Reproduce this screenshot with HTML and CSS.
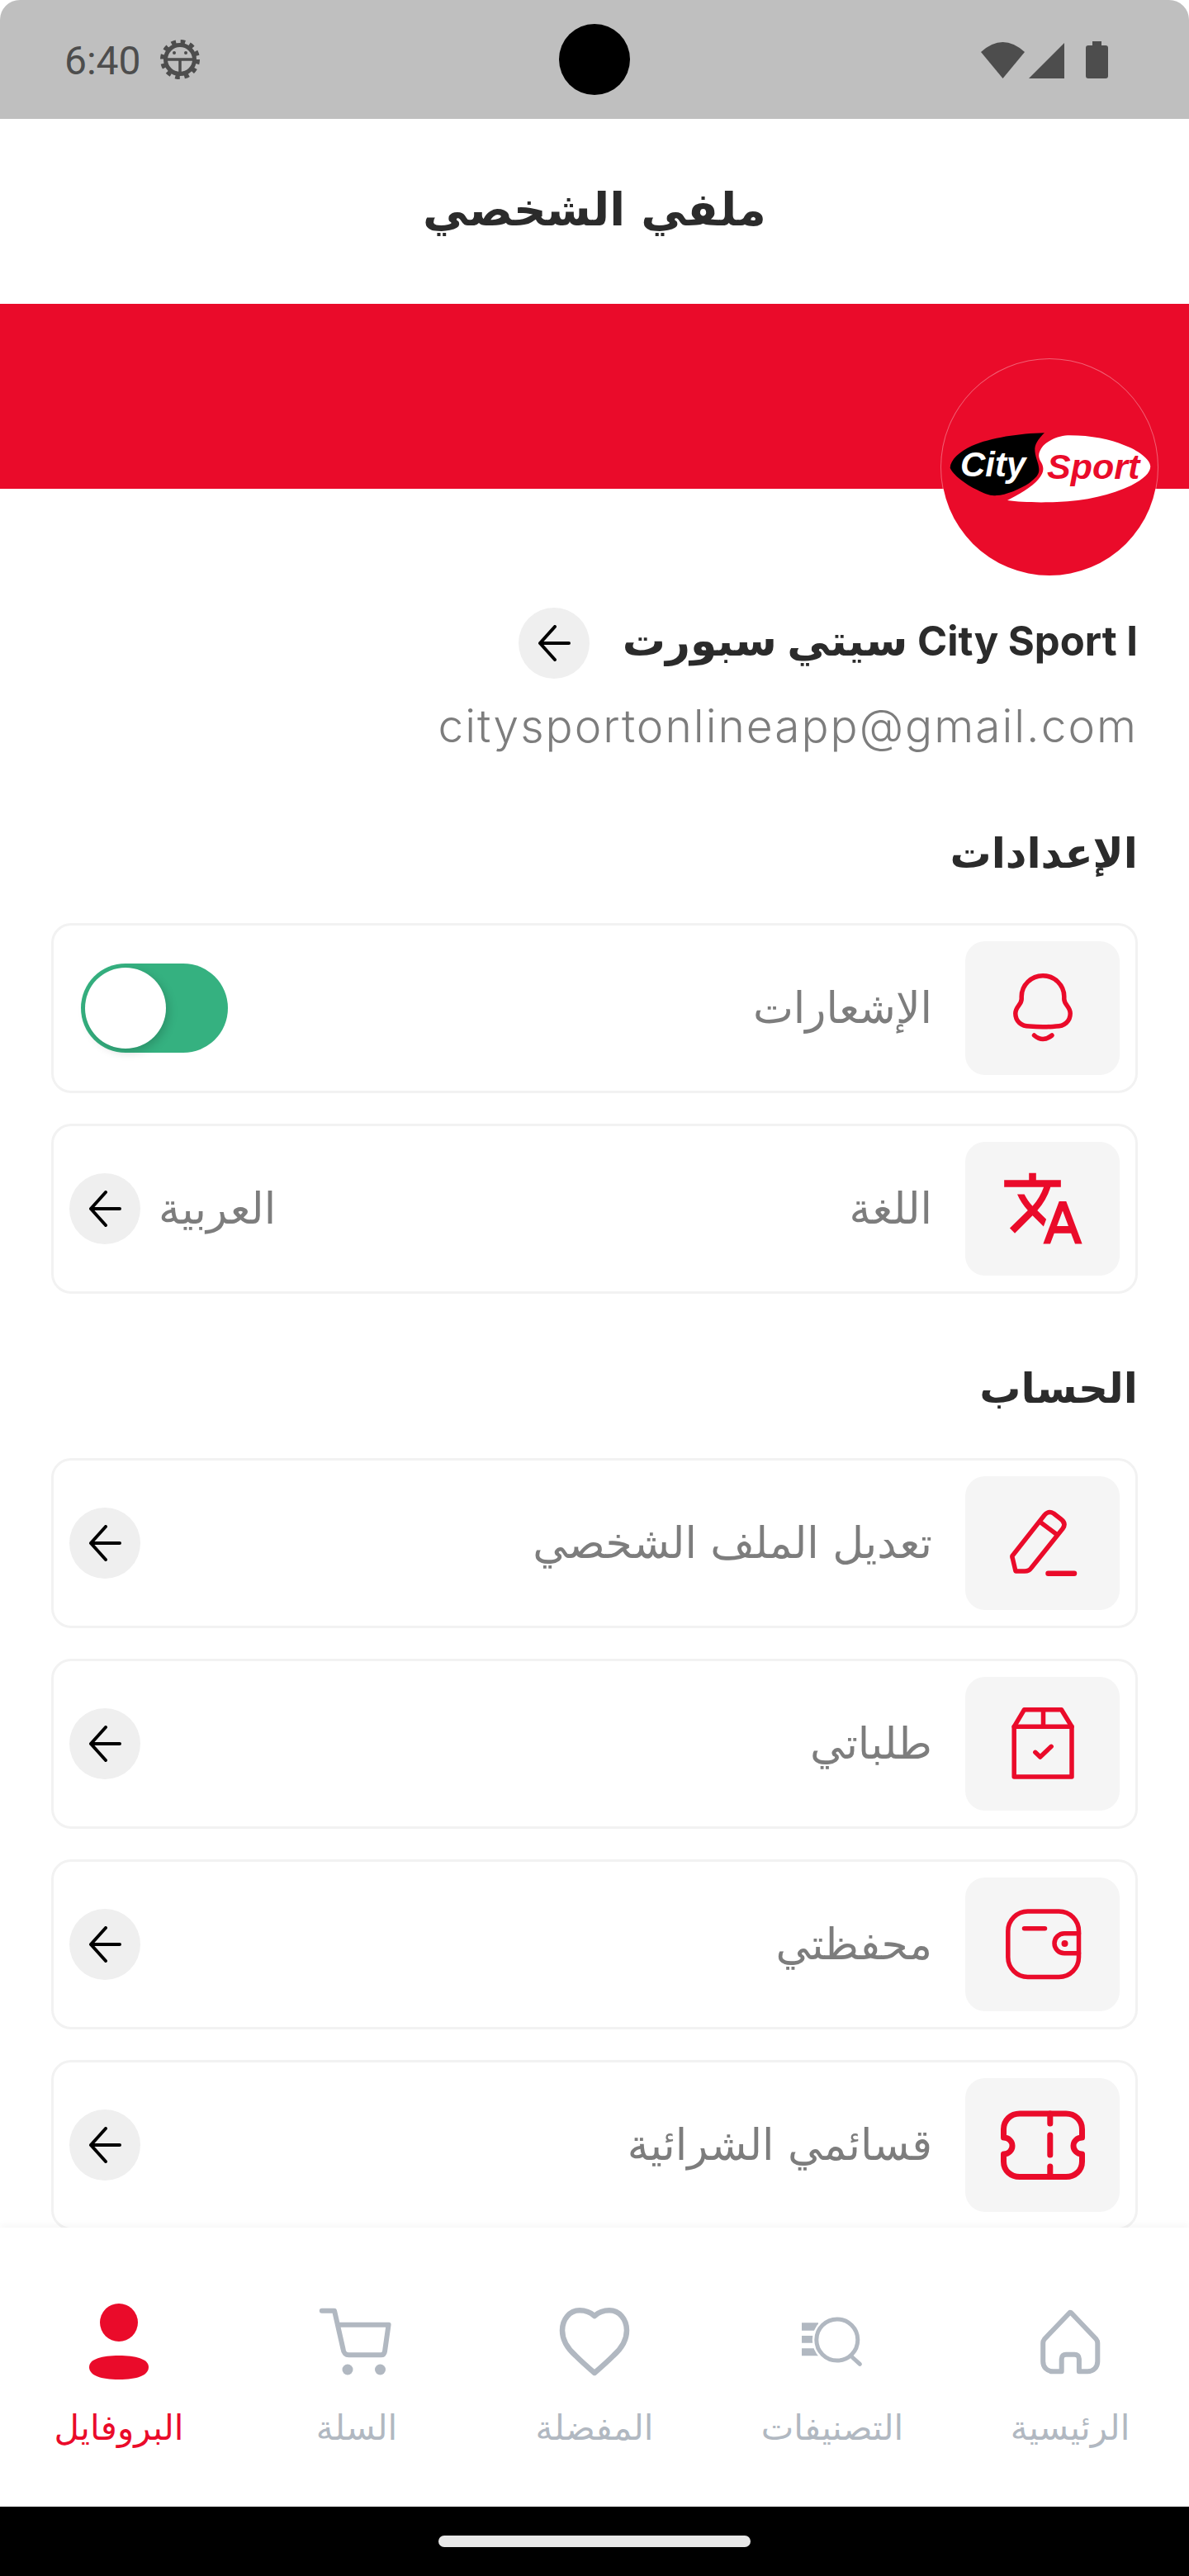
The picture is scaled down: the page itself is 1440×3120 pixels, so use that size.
FILE: index.html

```html
<!DOCTYPE html>
<html lang="ar" dir="rtl">
<head>
    <meta charset="UTF-8">
    <title>ملفي الشخصي</title>
    <link rel="stylesheet" href="styles.css">
</head>
<body>
    <div class="phone">
        <div class="status-bar" dir="ltr">
            <span class="time">6:40</span>
            <svg class="gear" viewBox="0 0 50 50" fill="none" stroke="#4d4d4d"><circle cx="25" cy="25" r="17.500" stroke-width="5"/><circle cx="25" cy="25" r="21.500" stroke-width="5" stroke-dasharray="5.630 5.630"/><path d="M8 25H42M25 25V42" stroke-width="3.500"/><circle cx="18" cy="17" r="2" fill="#4d4d4d" stroke="none"/><circle cx="32" cy="17" r="2" fill="#4d4d4d" stroke="none"/></svg>
            <div class="punch-hole"></div>
            <div class="status-icons">
                <svg width="53" height="44" viewBox="0 0 53 44"><path d="M26.500 44L0 12Q26.500-12 53 12z" fill="#4d4d4d"/></svg>
                <svg width="43" height="43" viewBox="0 0 43 43"><path d="M43 0v43H0z" fill="#4d4d4d"/></svg>
                <svg class="battery" width="27" height="45" viewBox="0 0 27 45"><path d="M8 0h11v5h5a3 3 0 0 1 3 3v34a3 3 0 0 1-3 3H3a3 3 0 0 1-3-3V8a3 3 0 0 1 3-3h5z" fill="#4d4d4d"/></svg>
            </div>
        </div>

        <header class="top-bar">
            <h1>ملفي الشخصي</h1>
        </header>

        <main class="content">
            <div class="banner">
                <div class="avatar">
                    <svg viewBox="0 0 262 262" width="262" height="262">
                        <path d="M153 92.300C180 92 205 97 221 104 238 110 253 121 253.300 130 253 138 245 145 230 153 206 164 175 172 140 173 115 174 95 173 80 171 92 165 110 155 118 145 124 138 125 132 121 125 116 117 118 112 123.300 105 130 98 142 93 153 92.300Z" fill="#fff"/>
                        <path d="M125 89.300C95 90 60 95 37 105 22 112 11 122 10.700 131.700 14 140 30 152 43.300 158.300 52 163 60 166 66.700 165 78 165 96 157 106.700 150 114 144 119 140 118.300 133 118 125 113 118 113.300 108.300 114 101 120 94 125 89.300Z" fill="#000"/>
                        <text class="logo-city" x="23" y="142">City</text>
                        <text class="logo-sport" x="128" y="145">Sport</text>
                    </svg>
                </div>
            </div>

            <section class="profile">
                <div class="name-row">
                    <span class="name">City Sport I <span class="name-ar">سيتي سبورت</span></span>
                    <span class="arrow-btn"><svg width="40" height="44" viewBox="0 0 40 44"><path d="M38 22H3M21 2L3 22l18 20" fill="none" stroke="#000" stroke-width="4" stroke-linecap="round" stroke-linejoin="round"/></svg></span>
                </div>
                <div class="email" dir="ltr">citysportonlineapp@gmail.com</div>
            </section>

            <section class="group settings">
                <h2>الإعدادات</h2>
                <div class="row">
                    <div class="row-icon">
                        <svg viewBox="0 0 100 100"><path d="M50 10.700C36 10.700 24.200 22 24.200 36V39C24.200 46 16.800 48 16.800 56.500 16.800 66 24 72 34 72 44 73 56 73 66 72 76 72 83.200 66 83.200 56.500 83.200 48 75.800 46 75.800 39V36C75.800 22 64 10.700 50 10.700Z"/><path d="M39.500 83Q50 92 61 83"/></svg>
                    </div>
                    <span class="row-label">الإشعارات</span>
                    <span class="toggle"><span class="thumb"></span></span>
                </div>
                <div class="row">
                    <div class="row-icon">
                        <svg viewBox="0.260 0.440 23.300 23.300"><path class="solid" d="M12.870 15.070l-2.540-2.510.03-.03c1.740-1.940 2.980-4.170 3.710-6.530H17V4h-7V2H8v2H1v1.990h11.170C11.500 7.920 10.440 9.750 9 11.350 8.070 10.320 7.300 9.190 6.690 8h-2c.73 1.630 1.730 3.170 2.980 4.560l-5.090 5.020L4 19l5-5 3.110 3.110.76-2.040zM18.500 10h-2L12 22h2l1.120-3h4.750L21 22h2l-4.500-12zm-2.620 7l1.620-4.330L19.120 17h-3.240z"/></svg>
                    </div>
                    <span class="row-label">اللغة</span>
                    <span class="row-value">العربية</span>
                    <span class="arrow-btn small"><svg width="40" height="44" viewBox="0 0 40 44"><path d="M38 22H3M21 2L3 22l18 20" fill="none" stroke="#000" stroke-width="4" stroke-linecap="round" stroke-linejoin="round"/></svg></span>
                </div>
            </section>

            <section class="group account">
                <h2>الحساب</h2>
                <div class="row">
                    <div class="row-icon">
                        <svg viewBox="0 0 100 100"><path d="M13 65.500L52 16C55 12.500 59 11.500 63 14L72 21C76.500 24.500 77 28.500 74 32.500L36 80C34 83 32 84 28 84H17L13.500 69C13 67 12.500 66.500 13 65.500Z"/><path d="M47.500 25L67.500 40"/><path d="M56.500 86.700H88" stroke-width="6.500"/></svg>
                    </div>
                    <span class="row-label">تعديل الملف الشخصي</span>
                    <span class="arrow-btn small"><svg width="40" height="44" viewBox="0 0 40 44"><path d="M38 22H3M21 2L3 22l18 20" fill="none" stroke="#000" stroke-width="4" stroke-linecap="round" stroke-linejoin="round"/></svg></span>
                </div>
                <div class="row">
                    <div class="row-icon">
                        <svg viewBox="0 0 100 100"><path d="M15.200 29.300L27.500 8.700H72.500L85 29.300V90H15.200Z"/><path d="M15.200 29.300H85M50.500 8.700V29.300"/><path d="M40.800 60.300L46.800 66L60.200 53.300"/></svg>
                    </div>
                    <span class="row-label">طلباتي</span>
                    <span class="arrow-btn small"><svg width="40" height="44" viewBox="0 0 40 44"><path d="M38 22H3M21 2L3 22l18 20" fill="none" stroke="#000" stroke-width="4" stroke-linecap="round" stroke-linejoin="round"/></svg></span>
                </div>
                <div class="row">
                    <div class="row-icon">
                        <svg viewBox="0 0 100 100"><rect x="7.800" y="10" width="85.700" height="79.500" rx="24"/><path d="M27.500 30.800H52.500"/><path d="M93.500 36.800H76A12 12 0 0 0 76 60.800H93.500"/><circle class="solid" cx="76.500" cy="49" r="4"/></svg>
                    </div>
                    <span class="row-label">محفظتي</span>
                    <span class="arrow-btn small"><svg width="40" height="44" viewBox="0 0 40 44"><path d="M38 22H3M21 2L3 22l18 20" fill="none" stroke="#000" stroke-width="4" stroke-linecap="round" stroke-linejoin="round"/></svg></span>
                </div>
                <div class="row">
                    <div class="row-icon">
                        <svg viewBox="0 0 100 100"><path stroke-width="7" d="M22 12H78C89 12 97.500 20 97.500 31V41C91 41 87 46 87 51 87 56 91 61 97.500 61V70C97.500 81 89 88.500 78 88.500H22C11 88.500 2.500 81 2.500 70V61C9 61 13 56 13 51 13 46 9 41 2.500 41V31C2.500 20 11 12 22 12Z"/><path stroke-width="7" d="M58.800 12V24M58.800 38V62M58.800 76V88"/></svg>
                    </div>
                    <span class="row-label">قسائمي الشرائية</span>
                    <span class="arrow-btn small"><svg width="40" height="44" viewBox="0 0 40 44"><path d="M38 22H3M21 2L3 22l18 20" fill="none" stroke="#000" stroke-width="4" stroke-linecap="round" stroke-linejoin="round"/></svg></span>
                </div>
            </section>
        </main>

        <nav class="tabs">
            <a class="tab">
                <svg viewBox="0 0 100 100"><path d="M49.800 15.700L19 48C17.800 49.500 17.200 51 17.200 53V75C17.200 82 22 87.300 29.600 87.300H39.700V72C39.700 68.500 42 66.700 45 66.700H55.500C58.500 66.700 60.900 68.500 60.900 72V87.300H71C78.500 87.300 83.300 82 83.300 75V53C83.300 51 82.700 49.500 81.500 48L52 17C51 15.700 50.500 15.700 49.800 15.700Z"/></svg>
                <span>الرئيسية</span>
            </a>
            <a class="tab">
                <svg viewBox="0 0 100 100"><path class="fill" d="M13 28.300H33V37.700H13zM13 44H27V52.700H13zM13 59.300H33V68.300H13z"/><circle cx="55.800" cy="49" r="30" fill="#fff" stroke="none"/><circle cx="55.800" cy="49" r="25" stroke-width="5"/><path d="M74.200 70L83.400 78.300" stroke-width="5"/></svg>
                <span>التصنيفات</span>
            </a>
            <a class="tab">
                <svg viewBox="0 0 100 100"><path stroke-width="6.500" d="M50 20C45 15.500 38 13.300 32 13.300 20 13.300 11 24 11 37.500 11 50 18 60 27 68 34 75 43 83 50 89 57 83 66 75 73 68 82 60 89 50 89 37.500 89 24 80 13.300 68 13.300 62 13.300 55 15.500 50 20Z"/></svg>
                <span>المفضلة</span>
            </a>
            <a class="tab">
                <svg viewBox="0 0 100 100"><path d="M7.800 13.700H23L33.500 60C34 65 37 67.300 40.400 67.300H79.400C82 67.300 83.600 65.500 84 63L88.600 30.700H27.500"/><circle class="fill" cx="39" cy="85" r="6.500"/><circle class="fill" cx="78.500" cy="85" r="6.500"/></svg>
                <span>السلة</span>
            </a>
            <a class="tab active">
                <svg viewBox="0 0 100 100"><circle class="fill" cx="50" cy="28" r="23"/><path class="fill" d="M14 82C14 72 30 68 50 68 70 68 86 72 86 82 86 92 72 97 50 97 28 97 14 92 14 82Z"/></svg>
                <span>البروفايل</span>
            </a>
        </nav>

        <div class="gesture-bar"><div class="pill"></div></div>
    </div>
</body>
</html>
```

FILE: styles.css

```css
* {
    box-sizing: border-box;
}
html, body {
    margin: 0;
    padding: 0;
    height: 3120px;
    overflow: hidden;
    background: #fff;
}
.phone {
    width: 1440px;
    height: 3120px;
    display: flex;
    flex-direction: column;
    overflow: hidden;
    font-family: "DejaVu Sans", sans-serif;
    background: #fff;
}

/* status bar */
.status-bar {
    position: relative;
    height: 144px;
    flex: none;
    display: flex;
    align-items: center;
    padding: 0 98px 0 78px;
    background: #bfbfbf;
    border-radius: 24px 24px 0 0;
}
.time {
    margin-top: 3px;
    font-family: Roboto, sans-serif;
    font-size: 48px;
    color: #4d4d4d;
}
.gear {
    width: 50px;
    height: 50px;
    margin-left: 22px;
    overflow: visible;
}
.punch-hole {
    position: absolute;
    left: 677px;
    top: 29px;
    width: 86px;
    height: 86px;
    border-radius: 50%;
    background: #000;
}
.status-icons {
    margin-left: auto;
    display: flex;
    align-items: flex-end;
    gap: 5px;
}
.battery {
    margin-left: 21px;
}

/* title */
.top-bar {
    height: 224px;
    flex: none;
    display: flex;
    align-items: center;
    justify-content: center;
}
.top-bar h1 {
    margin: 0 0 4px;
    font-size: 55px;
    font-weight: 700;
    color: #2b2b2b;
}

.content {
    flex: 1;
    min-height: 0;
    overflow: hidden;
}
.banner {
    position: relative;
    height: 224px;
    background: #ea0b2a;
}
.avatar {
    position: absolute;
    top: 67px;
    right: 38px;
    width: 262px;
    height: 262px;
    border-radius: 50%;
    background: #ea0b2a;
    box-shadow: 0 0 0 1px rgba(255, 255, 255, 0.35);
    direction: ltr;
}
.logo-city, .logo-sport {
    font-family: "Liberation Sans", sans-serif;
    font-weight: 700;
    font-style: italic;
}
.logo-city {
    font-size: 42px;
    fill: #fff;
}
.logo-sport {
    font-size: 43px;
    fill: #ea0b2a;
}

/* name and email */
.profile {
    padding: 144px 62px 0;
}
.name-row {
    display: flex;
    align-items: center;
    gap: 40px;
    height: 86px;
}
.name {
    margin-bottom: 5px;
    font-size: 49px;
    line-height: 70px;
    font-weight: 700;
    color: #2b2b2b;
    font-family: Inter, "DejaVu Sans", sans-serif;
}
.name-ar {
    font-size: 52px;
}
.arrow-btn {
    width: 86px;
    height: 86px;
    flex: none;
    display: flex;
    align-items: center;
    justify-content: center;
    border-radius: 50%;
    background: #efefef;
}
.email {
    margin-top: 22px;
    text-align: right;
    font-family: Inter, sans-serif;
    font-weight: 300;
    font-size: 55px;
    letter-spacing: 2px;
    line-height: 70px;
    color: #7d7d7d;
}

/* rows */
.group {
    padding: 0 62px;
    display: flex;
    flex-direction: column;
    gap: 37px;
}
.settings {
    margin-top: 90px;
}
.account {
    margin-top: 85px;
}
.group h2 {
    margin: 0 0 17px;
    font-size: 50px;
    line-height: 60px;
    font-weight: 700;
    color: #2b2b2b;
}
.row {
    height: 206px;
    flex: none;
    display: flex;
    align-items: center;
    padding: 0 19px;
    border: 3px solid #f2f2f2;
    border-radius: 24px;
}
.row-icon {
    width: 187px;
    height: 162px;
    flex: none;
    display: flex;
    align-items: center;
    justify-content: center;
    margin-left: 40px;
    border-radius: 24px;
    background: #f5f5f5;
}
.row-icon svg {
    width: 100px;
    height: 100px;
    overflow: visible;
    fill: none;
    stroke: #ea0b2a;
    stroke-width: 5.500;
    stroke-linecap: round;
    stroke-linejoin: round;
}
.row-icon svg .solid {
    fill: #ea0b2a;
    stroke: none;
}
.row-label {
    flex: 1;
    font-size: 52px;
    line-height: 70px;
    color: #7d7d7d;
}
.row-value {
    font-size: 52px;
    line-height: 70px;
    color: #7d7d7d;
    margin-left: 22px;
}
.toggle {
    width: 178px;
    height: 108px;
    flex: none;
    display: flex;
    align-items: center;
    justify-content: flex-end;
    margin-left: 14px;
    padding: 0 5px;
    border-radius: 54px;
    background: #35b180;
}
.thumb {
    width: 98px;
    height: 98px;
    border-radius: 50%;
    background: #fff;
    box-shadow: 3px 4px 12px rgba(0, 0, 0, 0.18);
}

/* bottom tabs */
.tabs {
    position: relative;
    height: 338px;
    flex: none;
    display: grid;
    grid-template-columns: repeat(5, 288px);
    padding-top: 87px;
    background: #fff;
    box-shadow: 0 -4px 8px rgba(0, 0, 0, 0.03);
}
.tab {
    display: flex;
    flex-direction: column;
    align-items: center;
    font-size: 42px;
    color: #b1b8c1;
}
.tab svg {
    width: 100px;
    height: 100px;
    fill: none;
    stroke: #b1b8c1;
    stroke-width: 6;
    stroke-linecap: round;
    stroke-linejoin: round;
}
.tab svg .fill {
    fill: #b1b8c1;
    stroke: none;
}
.tab span {
    margin-top: 26px;
    line-height: 60px;
}
.tab.active {
    color: #ea0b2a;
}
.tab.active svg .fill {
    fill: #ea0b2a;
}

.gesture-bar {
    height: 84px;
    flex: none;
    display: flex;
    justify-content: center;
    padding-top: 35px;
    background: #000;
}
.pill {
    width: 378px;
    height: 14px;
    border-radius: 7px;
    background: #e8e8e8;
}
```
